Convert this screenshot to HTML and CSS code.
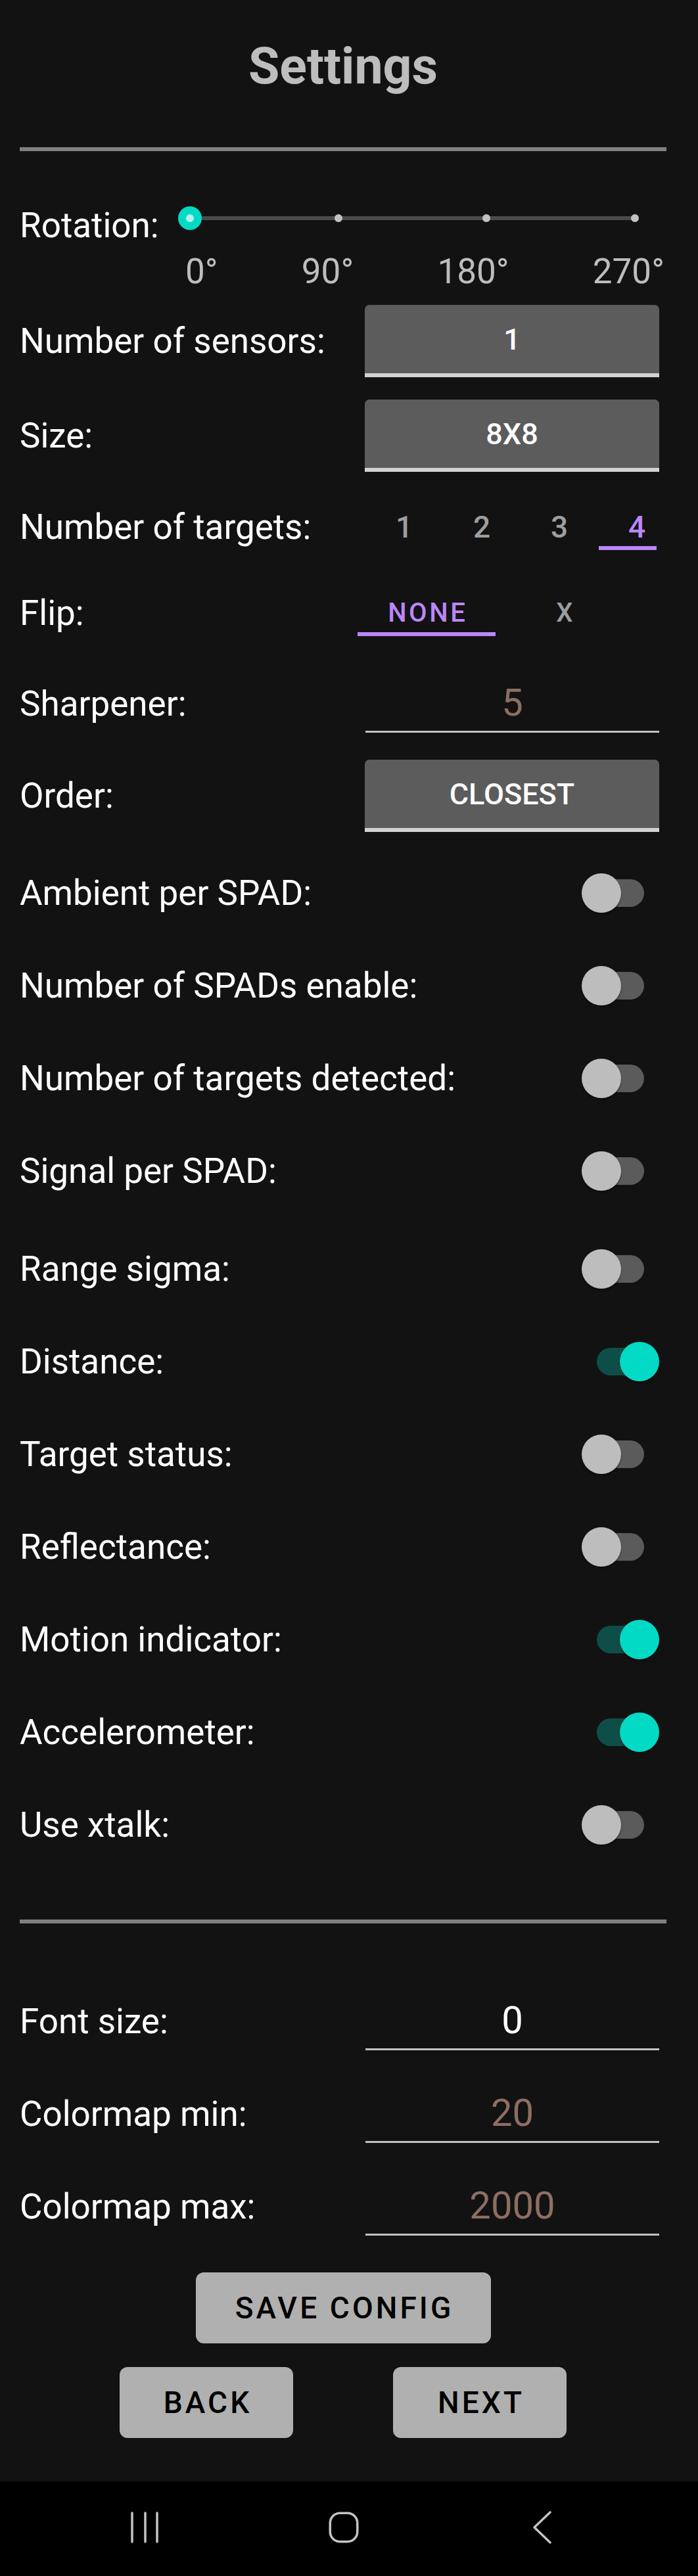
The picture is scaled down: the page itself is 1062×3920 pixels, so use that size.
FILE: index.html
```html
<!DOCTYPE html>
<html lang="en">
<head>
<meta charset="utf-8">
<title>Settings</title>
<link rel="stylesheet" href="styles.css">
</head>
<body>
<div class="screen">
  <main class="content">
    <h1 class="title">Settings</h1>
    <div class="divider divider-top"></div>

    <section class="rotation">
      <div class="rotation-row">
        <span class="label rotation-label">Rotation:</span>
        <div class="slider">
          <div class="track">
            <span class="tick"></span>
            <span class="tick"></span>
            <span class="tick"></span>
            <span class="tick"></span>
            <span class="thumb"><span class="thumb-core"></span></span>
          </div>
        </div>
      </div>
      <div class="tick-labels"><span>0°</span><span>90°</span><span>180°</span><span>270°</span></div>
    </section>

    <div class="field-row select-row row-sensors">
      <span class="label label-col">Number of sensors:</span>
      <div class="select">1</div>
    </div>
    <div class="field-row select-row row-size">
      <span class="label label-col">Size:</span>
      <div class="select">8X8</div>
    </div>

    <div class="field-row tab-row row-targets">
      <span class="label label-col tab-label">Number of targets:</span>
      <div class="tabs num-tabs">
        <span class="tab num-tab">1</span>
        <span class="tab num-tab">2</span>
        <span class="tab num-tab">3</span>
        <span class="tab num-tab selected">4</span>
      </div>
    </div>

    <div class="field-row tab-row row-flip">
      <span class="label label-col tab-label">Flip:</span>
      <div class="tabs flip-tabs">
        <span class="tab flip-tab selected">NONE</span>
        <span class="tab flip-tab">X</span>
      </div>
    </div>

    <div class="field-row edit-row row-sharpener">
      <span class="label label-col edit-label">Sharpener:</span>
      <div class="edit hint">5</div>
    </div>

    <div class="field-row select-row row-order">
      <span class="label label-col">Order:</span>
      <div class="select">CLOSEST</div>
    </div>

    <div class="toggles">
      <div class="field-row toggle-row"><span class="label">Ambient per SPAD:</span><span class="switch"><span class="switch-track"></span><span class="switch-thumb"></span></span></div>
      <div class="field-row toggle-row"><span class="label">Number of SPADs enable:</span><span class="switch"><span class="switch-track"></span><span class="switch-thumb"></span></span></div>
      <div class="field-row toggle-row"><span class="label">Number of targets detected:</span><span class="switch"><span class="switch-track"></span><span class="switch-thumb"></span></span></div>
      <div class="field-row toggle-row"><span class="label">Signal per SPAD:</span><span class="switch"><span class="switch-track"></span><span class="switch-thumb"></span></span></div>
      <div class="field-row toggle-row row-range"><span class="label">Range sigma:</span><span class="switch"><span class="switch-track"></span><span class="switch-thumb"></span></span></div>
      <div class="field-row toggle-row"><span class="label">Distance:</span><span class="switch on"><span class="switch-track"></span><span class="switch-thumb"></span></span></div>
      <div class="field-row toggle-row"><span class="label">Target status:</span><span class="switch"><span class="switch-track"></span><span class="switch-thumb"></span></span></div>
      <div class="field-row toggle-row"><span class="label">Reflectance:</span><span class="switch"><span class="switch-track"></span><span class="switch-thumb"></span></span></div>
      <div class="field-row toggle-row"><span class="label">Motion indicator:</span><span class="switch on"><span class="switch-track"></span><span class="switch-thumb"></span></span></div>
      <div class="field-row toggle-row"><span class="label">Accelerometer:</span><span class="switch on"><span class="switch-track"></span><span class="switch-thumb"></span></span></div>
      <div class="field-row toggle-row"><span class="label">Use xtalk:</span><span class="switch"><span class="switch-track"></span><span class="switch-thumb"></span></span></div>
    </div>

    <div class="divider divider-bottom"></div>

    <div class="field-row edit-row row-font">
      <span class="label label-col edit-label">Font size:</span>
      <div class="edit">0</div>
    </div>
    <div class="field-row edit-row row-cmap">
      <span class="label label-col edit-label">Colormap min:</span>
      <div class="edit hint">20</div>
    </div>
    <div class="field-row edit-row row-cmap">
      <span class="label label-col edit-label">Colormap max:</span>
      <div class="edit hint">2000</div>
    </div>

    <div class="actions">
      <button class="btn btn-save">SAVE CONFIG</button>
      <div class="btn-row">
        <button class="btn btn-nav">BACK</button>
        <button class="btn btn-nav">NEXT</button>
      </div>
    </div>
  </main>

  <nav class="navbar">
    <svg class="nav-icon" width="50" height="50" viewBox="0 0 50 50" aria-hidden="true">
      <path d="M5 3 V47 M25 3 V47 M43 3 V47" fill="none" stroke="#c4c4c4" stroke-width="3.5" stroke-linecap="round"/>
    </svg>
    <svg class="nav-icon" width="50" height="50" viewBox="0 0 50 50" aria-hidden="true">
      <rect x="4.25" y="3.25" width="41.5" height="43.5" rx="15" ry="15" fill="none" stroke="#c4c4c4" stroke-width="3.5"/>
    </svg>
    <svg class="nav-icon" width="50" height="50" viewBox="0 0 50 50" aria-hidden="true">
      <path d="M37 2 L13 25 L37 48" fill="none" stroke="#c4c4c4" stroke-width="3.5" stroke-linecap="round" stroke-linejoin="round"/>
    </svg>
  </nav>
</div>
</body>
</html>
```

FILE: styles.css
```css
* {
  box-sizing: border-box;
}

html, body {
  margin: 0;
  padding: 0;
  background: #121212;
}

.screen {
  width: 1062px;
  height: 3920px;
  background: #121212;
  display: flex;
  flex-direction: column;
  font-family: Roboto, "Noto Sans", "Liberation Sans", sans-serif;
  overflow: hidden;
}

.content {
  flex: 1;
  padding: 0 59px 0 30px;
}

.title {
  margin: 56px -11px 0 0;
  height: 90px;
  line-height: 90px;
  font-size: 77px;
  font-weight: 700;
  color: #bdbdbd;
  text-align: center;
}

.divider {
  height: 6px;
  background: #808080;
  margin-right: -11px;
}

.divider-top {
  margin-top: 78px;
}

.divider-bottom {
  margin-top: 73.5px;
}

.label {
  font-size: 53px;
  line-height: 62px;
  color: #ffffff;
  white-space: nowrap;
}

/* Rotation slider */
.rotation-row {
  display: flex;
  align-items: center;
  height: 84px;
  margin-top: 60px;
}

.rotation-label {
  width: 259px;
  flex: none;
  margin-top: 21px;
}

.slider {
  width: 677px;
  flex: none;
}

.track {
  position: relative;
  height: 6px;
  border-radius: 3px;
  background: #4b4b4b;
  display: flex;
  justify-content: space-between;
  align-items: center;
}

.tick {
  width: 12px;
  height: 12px;
  margin: 0 -6px;
  border-radius: 50%;
  background: #c2c2c2;
}

.thumb {
  position: absolute;
  left: -18px;
  top: -15px;
  width: 36px;
  height: 36px;
  border-radius: 50%;
  background: #03dac5;
  display: flex;
  align-items: center;
  justify-content: center;
}

.thumb-core {
  width: 12px;
  height: 12px;
  border-radius: 50%;
  background: #b4f4ec;
}

.tick-labels {
  display: flex;
  justify-content: space-between;
  align-items: center;
  height: 77px;
  margin: 0 -8px 0 252px;
  font-size: 53px;
  color: #bdbdbd;
}

/* Generic rows */
.field-row {
  display: flex;
  align-items: center;
}

.label-col {
  width: 525px;
  flex: none;
}

/* Dropdown boxes */
.select-row {
  height: 110px;
}

.row-sensors {
  margin-top: 13px;
}

.row-size {
  margin-top: 34px;
}

.row-order {
  margin-top: 41px;
}

.select {
  width: 448px;
  height: 110px;
  background: #5c5c5c;
  border-bottom: 6px solid #d2d2d2;
  border-radius: 7px 7px 0 0;
  display: flex;
  align-items: center;
  justify-content: center;
  padding-top: 1px;
  font-size: 45px;
  font-weight: 500;
  color: #ffffff;
}

/* Tabs */
.tab-row {
  align-items: flex-start;
}

.tab-label {
  line-height: 58px;
}

.row-targets {
  margin-top: 54.5px;
}

.row-flip {
  margin-top: 67px;
}

.tabs {
  display: flex;
}

.tab {
  line-height: 58px;
  text-align: center;
  border-bottom: 6px solid transparent;
  font-weight: 500;
  color: #9e9e9e;
}

.tab.selected {
  color: #bb86fc;
  border-bottom-color: #bb86fc;
}

.num-tabs {
  gap: 30px;
  margin-left: 2px;
}

.num-tab {
  width: 88px;
  padding-left: 28px;
  font-size: 46px;
}

.flip-tabs {
  margin-left: -11px;
}

.flip-tab {
  width: 210px;
  font-size: 40px;
  letter-spacing: 3.6px;
  padding-left: 3.6px;
}

/* Edit fields */
.edit-row {
  align-items: flex-start;
}

.edit-label {
  line-height: 75px;
}

.row-sharpener {
  margin-top: 66.5px;
}

.row-font {
  margin-top: 112px;
}

.row-cmap {
  margin-top: 60px;
}

.edit {
  width: 447px;
  margin-left: 1px;
  line-height: 70px;
  padding-bottom: 8px;
  border-bottom: 3px solid #c2c2c2;
  font-size: 58px;
  text-align: center;
  color: #ffffff;
}

.edit.hint {
  color: #8d6e63;
}

/* Switches */
.toggles {
  margin-top: 22.5px;
}

.toggle-row {
  height: 141px;
  justify-content: space-between;
}

.row-range {
  margin-top: 8px;
}

.switch {
  position: relative;
  width: 118px;
  height: 60px;
  flex: none;
}

.switch-track {
  position: absolute;
  left: 23px;
  top: 9px;
  width: 72px;
  height: 42px;
  border-radius: 21px;
  background: #5b5b5b;
}

.switch-thumb {
  position: absolute;
  left: 0;
  top: 0;
  width: 60px;
  height: 60px;
  border-radius: 50%;
  background: #bdbdbd;
  box-shadow: 0 2px 3px rgba(0, 0, 0, 0.45);
}

.switch.on .switch-track {
  background: #0e4e48;
}

.switch.on .switch-thumb {
  left: 58px;
  background: #03dac5;
}

/* Buttons */
.actions {
  margin-top: 56px;
  margin-right: -11px;
  display: flex;
  flex-direction: column;
  align-items: center;
}

.btn {
  height: 108px;
  border: 0;
  border-radius: 12px;
  background: #b0b0b0;
  color: #000000;
  font-family: Roboto, "Noto Sans", "Liberation Sans", sans-serif;
  font-size: 46px;
  font-weight: 500;
  letter-spacing: 4.1px;
  padding: 0 0 0 4.1px;
  display: flex;
  align-items: center;
  justify-content: center;
}

.btn-save {
  width: 449px;
}

.btn-row {
  display: flex;
  gap: 152px;
  margin-top: 36px;
}

.btn-nav {
  width: 264px;
}

/* Navigation bar */
.navbar {
  height: 144px;
  flex: none;
  background: #000000;
  display: flex;
  align-items: center;
  gap: 252px;
  padding: 0 0 4px 196px;
}

.nav-icon {
  display: block;
  flex: none;
}
```
